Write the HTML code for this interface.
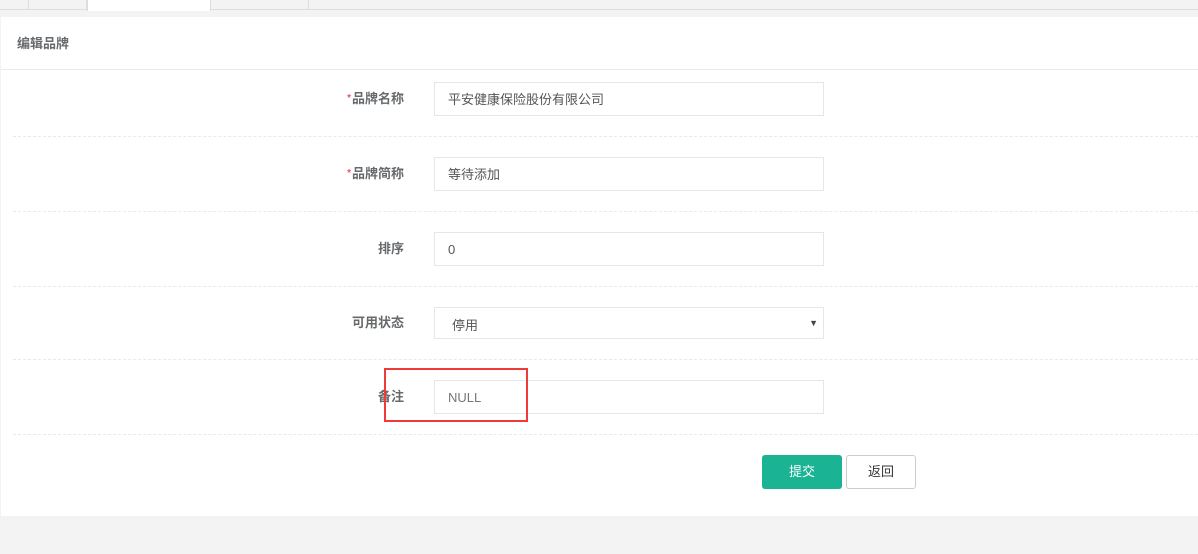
<!DOCTYPE html>
<html><head><meta charset="utf-8"><style>
*{margin:0;padding:0;box-sizing:border-box}
body{width:1198px;height:554px;background:#f3f3f4;font-family:"Liberation Sans","Noto Sans CJK SC",sans-serif;color:#676a6c;font-size:13px;position:relative;overflow:hidden}
.abs{position:absolute}
.tabbar{left:0;top:0;width:1198px;height:10px;background:#f3f3f3;border-bottom:1px solid #ddd}
.tab{top:0;height:10px;border-right:1px solid #ddd}
.panel{left:1px;top:17px;width:1197px;height:499px;background:#fff}
.hd{left:1px;top:17px;width:1197px;height:53px;border-bottom:1px solid #e7eaec;padding:18px 0 0 16px;font-weight:bold;font-size:13px;line-height:18px}
.lbl{width:120px;left:284px;text-align:right;font-weight:bold;font-size:13px;line-height:18px}
.lbl i{color:#ed5565;font-style:normal;font-size:10px;vertical-align:2px;margin-right:1px}
.inp{left:434px;width:390px;height:34px;border:1px solid #e5e6e7;padding-left:13px;line-height:34px;color:#555}
.sep{left:13px;width:1185px;border-top:1px dashed #e7eaec}
.btn{top:455px;height:34px;line-height:34px;text-align:center;border-radius:3px;font-size:13px}
</style></head><body>
<div class="abs tabbar"></div>
<div class="abs tab" style="left:0;width:29px"></div>
<div class="abs tab" style="left:29px;width:58px"></div>
<div class="abs" style="left:87px;top:0;width:124px;height:11px;background:#fff;border-right:1px solid #ddd;border-left:1px solid #ddd"></div>
<div class="abs tab" style="left:211px;width:98px"></div>
<div class="abs panel"></div>
<div class="abs hd">编辑品牌</div>

<div class="abs lbl" style="top:90px"><i>*</i>品牌名称</div>
<div class="abs inp" style="top:82px">平安健康保险股份有限公司</div>
<div class="abs sep" style="top:136px"></div>

<div class="abs lbl" style="top:165px"><i>*</i>品牌简称</div>
<div class="abs inp" style="top:157px">等待添加</div>
<div class="abs sep" style="top:211px"></div>

<div class="abs lbl" style="top:240px">排序</div>
<div class="abs inp" style="top:232px">0</div>
<div class="abs sep" style="top:286px"></div>

<div class="abs lbl" style="top:314px">可用状态</div>
<div class="abs inp" style="top:307px;height:32px;line-height:36px;padding-left:17px">停用<span style="position:absolute;right:5px;top:-3px;font-size:9px;color:#444">▼</span></div>
<div class="abs sep" style="top:359px"></div>

<div class="abs lbl" style="top:388px">备注</div>
<div class="abs inp" style="top:380px;color:#777">NULL</div>
<div class="abs" style="left:384px;top:368px;width:144px;height:54px;border:2px solid #f03a3a"></div>
<div class="abs sep" style="top:434px"></div>

<div class="abs btn" style="left:762px;width:80px;background:#1ab394;color:#fff">提交</div>
<div class="abs btn" style="left:846px;width:70px;border:1px solid #ccc;background:#fff;color:#333;line-height:32px">返回</div>
</body></html>
